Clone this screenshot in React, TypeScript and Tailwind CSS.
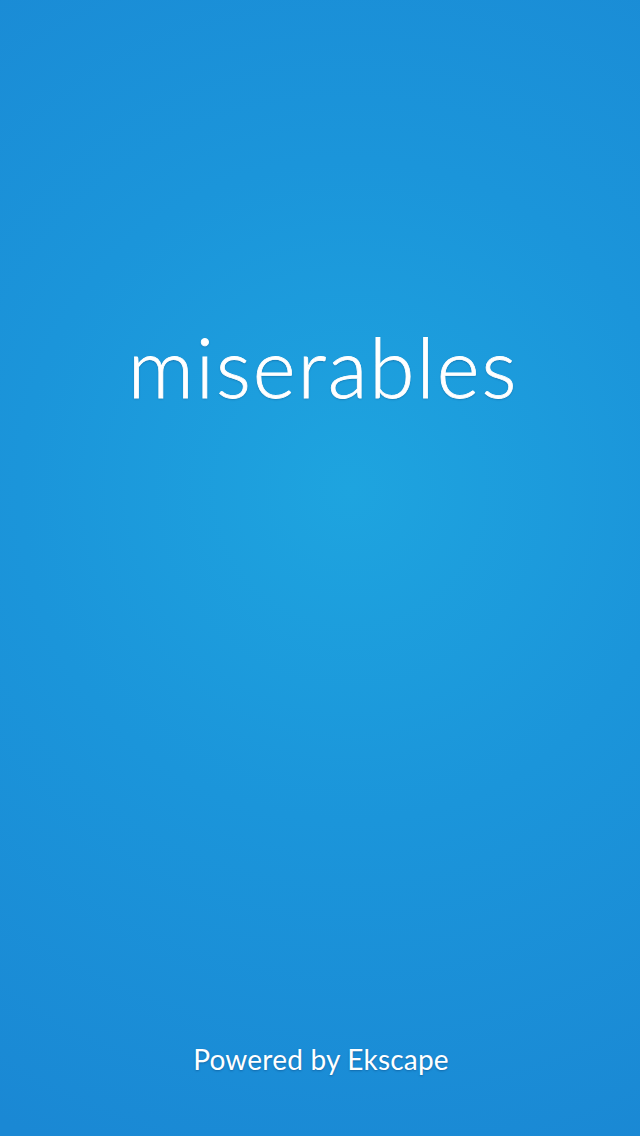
export default function App() {
  return (
    <div
      className="w-[640px] h-[1136px] flex flex-col items-center bg-[radial-gradient(circle_at_350px_490px,#1ea4df_0%,#1b95da_330px,#1a88d4_720px)] text-white"
      style={{ fontFamily: "Lato, 'Noto Sans', sans-serif" }}
    >
      <div className="mt-[321px] ml-[6px] text-[82px] leading-[90px] font-light tracking-[2px] [-webkit-text-stroke:0.8px_white] [text-shadow:0_1px_2px_rgba(0,40,90,0.35)]">
        miserables
      </div>
      <div className="flex-1" />
      <div className="mb-[60px] ml-[2px] text-[28px] leading-[34px] tracking-[0.2px] [text-shadow:0_1px_2px_rgba(0,40,90,0.35)]">
        Powered by Ekscape
      </div>
    </div>
  );
}
